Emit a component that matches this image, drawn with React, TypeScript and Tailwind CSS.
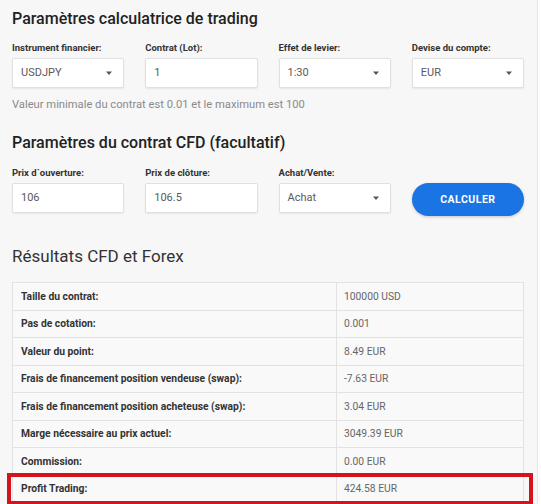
import React from "react";

const font = { fontFamily: "Roboto, 'Noto Sans', Arial, sans-serif" };

function Caret() {
  return (
    <svg width="8" height="5" viewBox="0 0 8 5" className="shrink-0">
      <path d="M1 0.5 L7 0.5 L4 4 Z" fill="#555" />
    </svg>
  );
}

function Field({ label, value, select }: { label: string; value: string; select?: boolean }) {
  return (
    <div className="flex flex-col">
      <div className="h-[20px] flex items-center text-[9.5px] font-bold text-[#333] leading-none">{label}</div>
      <div className="h-[30px] bg-white border border-[#e0e0e0] rounded-[2px] shadow-[0_1px_2px_rgba(0,0,0,0.07)] flex items-center justify-between pl-[8px] pr-[10px] text-[11px] text-[#5a5a5a]">
        <span>{value}</span>
        {select && <Caret />}
      </div>
    </div>
  );
}

const rows: [string, string][] = [
  ["Taille du contrat:", "100000 USD"],
  ["Pas de cotation:", "0.001"],
  ["Valeur du point:", "8.49 EUR"],
  ["Frais de financement position vendeuse (swap):", "-7.63 EUR"],
  ["Frais de financement position acheteuse (swap):", "3.04 EUR"],
  ["Marge nécessaire au prix actuel:", "3049.39 EUR"],
  ["Commission:", "0.00 EUR"],
  ["Profit Trading:", "424.58 EUR"],
];

export default function App() {
  return (
    <div className="w-[541px] h-[504px] overflow-hidden bg-white flex" style={font}>
      <div className="relative w-[538px] h-[504px] bg-[#f7f7f7] border-r border-[#e6e6e6] px-[12px] flex flex-col">
        <div className="h-[38px] shrink-0 flex items-center text-[16px] font-medium text-[#222] leading-none">
          Paramètres calculatrice de trading
        </div>
        <div className="grid grid-cols-4 gap-x-[21px] w-[512px]">
          <Field label="Instrument financier:" value="USDJPY" select />
          <Field label="Contrat (Lot):" value="1" />
          <Field label="Effet de levier:" value="1:30" select />
          <Field label="Devise du compte:" value="EUR" select />
        </div>
        <div className="h-[34px] shrink-0 flex items-center text-[11.2px] text-[#8a8a8a]">
          Valeur minimale du contrat est 0.01 et le maximum est 100
        </div>
        <div className="h-[41px] shrink-0 flex items-center text-[16px] font-medium text-[#222] leading-none">
          Paramètres du contrat CFD (facultatif)
        </div>
        <div className="grid grid-cols-4 gap-x-[21px] w-[512px] items-start">
          <Field label="Prix d`ouverture:" value="106" />
          <Field label="Prix de clôture:" value="106.5" />
          <Field label="Achat/Vente:" value="Achat" select />
          <div className="pt-[20px]">
            <button className="w-full h-[33px] rounded-full bg-[#1b74e4] text-white text-[10.5px] font-bold tracking-[0.5px] shadow-[0_1px_3px_rgba(0,0,0,0.2)]">
              CALCULER
            </button>
          </div>
        </div>
        <div className="mt-[30px] h-[20px] shrink-0 flex items-center text-[17px] text-[#333] leading-none">
          Résultats CFD et Forex
        </div>
        <div className="mt-[16px] w-[512px] border-t border-l border-r border-[#e2e2e2] bg-[#f9f9f9]">
          {rows.map(([l, v]) => (
            <div key={l} className="flex h-[27.5px] border-b border-[#e2e2e2]">
              <div className="w-[324px] border-r border-[#e2e2e2] pl-[8px] flex items-center text-[10.3px] font-bold text-[#333]">
                {l}
              </div>
              <div className="flex-1 pl-[7px] flex items-center text-[10.3px] text-[#666]">{v}</div>
            </div>
          ))}
        </div>
        <div className="absolute left-[7px] top-[473px] w-[526px] h-[32px] border-[4px] border-[#d3141c] pointer-events-none" />
      </div>
    </div>
  );
}
